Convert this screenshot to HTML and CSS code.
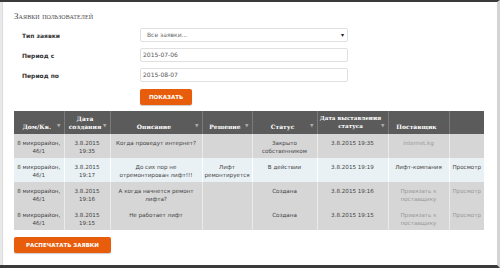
FILE: index.html
```html
<!DOCTYPE html>
<html>
<head>
<meta charset="utf-8">
<link rel="stylesheet" href="styles.css">
</head>
<body>
<div class="frame">
  <div class="card">
    <h1 class="title">Заявки пользователей</h1>
    <div class="form">
      <div class="row">
        <label class="label">Тип заявки</label>
        <div class="input select">Все заявки...<span class="caret">▾</span></div>
      </div>
      <div class="row">
        <label class="label">Период с</label>
        <div class="input">2015-07-06</div>
      </div>
      <div class="row">
        <label class="label">Период по</label>
        <div class="input">2015-08-07</div>
      </div>
      <div class="row">
        <span class="label"></span>
        <button class="btn">ПОКАЗАТЬ</button>
      </div>
    </div>
    <table class="grid">
      <colgroup>
        <col style="width:50px"><col style="width:46px"><col style="width:92px"><col style="width:50px"><col style="width:65px"><col style="width:71px"><col style="width:61px"><col style="width:35px">
      </colgroup>
      <thead>
        <tr>
          <th class="f">Дом/Кв.<i>▼</i></th>
          <th class="f">Дата создания<i>▼</i></th>
          <th class="f">Описание<i>▼</i></th>
          <th class="f">Решение<i>▼</i></th>
          <th class="f">Статус<i>▼</i></th>
          <th class="f wide">Дата выставления статуса<i>▼</i></th>
          <th>Поставщик</th>
          <th></th>
        </tr>
      </thead>
      <tbody>
        <tr>
          <td>8 микрорайон, 46/1</td>
          <td class="d">3.8.2015 19:35</td>
          <td>Когда проведут интернет?</td>
          <td></td>
          <td>Закрыто собственником</td>
          <td>3.8.2015 19:35</td>
          <td class="muted">internet.kg</td>
          <td></td>
        </tr>
        <tr class="hl">
          <td>8 микрорайон, 46/1</td>
          <td class="d">3.8.2015 19:17</td>
          <td>До сих пор не отремонтирован лифт!!!</td>
          <td>Лифт ремонтируется</td>
          <td>В действии</td>
          <td>3.8.2015 19:19</td>
          <td>Лифт-компания</td>
          <td>Просмотр</td>
        </tr>
        <tr>
          <td>8 микрорайон, 46/1</td>
          <td class="d">3.8.2015 19:16</td>
          <td>А когда начнется ремонт лифта?</td>
          <td></td>
          <td>Создана</td>
          <td>3.8.2015 19:16</td>
          <td class="muted">Привязать к поставщику</td>
          <td class="muted">Просмотр</td>
        </tr>
        <tr>
          <td>8 микрорайон, 46/1</td>
          <td class="d">3.8.2015 19:15</td>
          <td>Не работает лифт</td>
          <td></td>
          <td>Создана</td>
          <td>3.8.2015 19:15</td>
          <td class="muted">Привязать к поставщику</td>
          <td class="muted">Просмотр</td>
        </tr>
      </tbody>
    </table>
    <button class="btn print">РАСПЕЧАТАТЬ ЗАЯВКИ</button>
  </div>
</div>
</body>
</html>
```
FILE: styles.css
```css
* { box-sizing: border-box; }
html, body { margin: 0; padding: 0; }
body {
  width: 500px;
  height: 268px;
  overflow: hidden;
  background: #e9e9e9;
  font-family: "DejaVu Sans", Verdana, sans-serif;
}
.frame {
  height: 268px;
  border-top: 2px solid #3a3a3a;
  border-bottom: 3px solid #3a3a3a;
  border-right: 3px solid #d4d4d4;
  padding-left: 2px;
  display: flex;
}
.card {
  flex: 1;
  background: #fff;
  border-left: 1px solid #dcdcdc;
  padding: 8px 0 0 11px;
}
.title {
  margin: 0;
  font-family: "Liberation Serif", "DejaVu Serif", serif;
  font-variant: small-caps;
  font-weight: normal;
  font-size: 9px;
  color: #4a4a4a;
  line-height: 12px;
  letter-spacing: 0.1px;
}
.form {
  display: flex;
  flex-direction: column;
  gap: 6px;
  margin-top: 6px;
}
.row {
  display: flex;
  align-items: center;
}
.label {
  width: 126px;
  padding-left: 8px;
  font-size: 6px;
  font-weight: bold;
  color: #333;
}
.input {
  width: 208px;
  height: 14px;
  border: 1px solid #e0e0e0;
  border-radius: 2px;
  font-size: 6px;
  color: #555;
  line-height: 12px;
  padding-left: 2px;
  position: relative;
}
.select { padding-left: 6px; color: #666; }
.caret {
  position: absolute;
  right: 3px;
  top: 0;
  font-size: 6px;
  color: #222;
}
.btn {
  border: none;
  background: #e85d0b;
  color: #fff;
  font-family: "DejaVu Sans", Verdana, sans-serif;
  font-weight: bold;
  font-size: 5.5px;
  height: 16px;
  padding: 0 9px;
  border-radius: 2px;
  box-shadow: 0 1px 1px rgba(0,0,0,0.2);
  margin-top: 1px;
}
.grid {
  margin-top: 6px;
  width: 470px;
  border-collapse: collapse;
  table-layout: fixed;
  font-size: 5.6px;
}
.grid th {
  background: #5b5b5b;
  color: #fff;
  font-family: "DejaVu Serif", "Liberation Serif", serif;
  font-weight: bold;
  font-size: 6px;
  height: 23px;
  vertical-align: bottom;
  padding: 2px 7px 4px 3px;
  line-height: 7.5px;
  border-left: 1px solid #7a7a7a;
  position: relative;
  text-align: center;
}
.grid th.wide { padding-left: 1px; padding-right: 5px; font-size: 5.6px; }
.grid th:first-child { border-left: none; }
.grid th i {
  position: absolute;
  right: 3px;
  bottom: 5px;
  font-style: normal;
  font-size: 4.5px;
  color: #aaa;
}
.grid td {
  background: #d6d6d6;
  color: #444;
  height: 24px;
  vertical-align: top;
  text-align: center;
  padding: 5px 1px 2px;
  line-height: 8px;
  border-left: 1px solid #eaeaea;
}
.grid td.d { padding-left: 6px; padding-right: 6px; }
.grid td:first-child { border-left: none; }
.grid tr.hl td { background: #e9f1f5; border-left-color: #fff; }
.grid td.muted { color: #999; }
.print { margin-top: 7px; padding: 0 12px; }
```
